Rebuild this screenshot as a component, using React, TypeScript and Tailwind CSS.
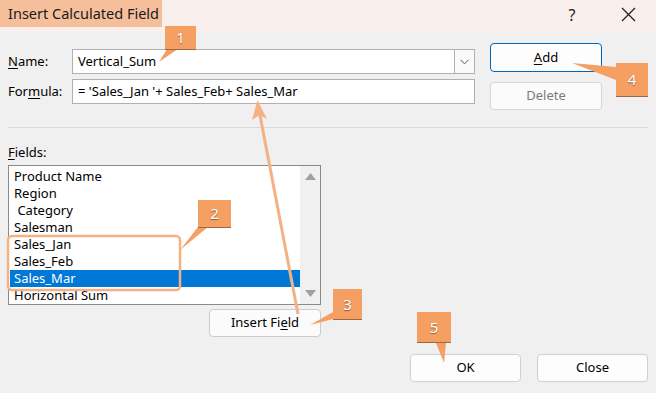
import React from "react";

const items = ["Product Name", "Region", " Category", "Salesman", "Sales_Jan", "Sales_Feb", "Sales_Mar", "Horizontal Sum"];

function Callout({ n, className }: { n: string; className: string }) {
  return (
    <div
      className={`absolute flex items-center justify-center bg-[#f59f63] text-white text-[15px] border-b border-[#9a6a48] [text-shadow:0_1px_1px_rgba(0,0,0,0.45)] ${className}`}
    >
      {n}
    </div>
  );
}

export default function App() {
  return (
    <div className="relative w-[656px] h-[393px] overflow-hidden bg-[#f0f0f0] text-black font-['Noto_Sans',sans-serif]">
      {/* Title bar */}
      <div className="flex h-[32px] bg-[#f9efec]">
        <div className="h-[27px] w-[162px] bg-[#f6bf9c] pl-[8px] flex items-center text-[14.5px] text-[#1a1a1a]">
          Insert Calculated Field
        </div>
        <div className="ml-auto flex items-center h-[29px] pr-[18px]">
          <span className="w-[20px] text-center text-[16px] text-[#222]">?</span>
          <span className="ml-[36px] w-[20px] h-[20px] flex items-center justify-center">
            <svg width="15" height="15" viewBox="0 0 15 15">
              <path d="M1 1 L14 14 M14 1 L1 14" stroke="#222" strokeWidth="1.3" />
            </svg>
          </span>
        </div>
      </div>

      {/* Upper section */}
      <div className="flex h-[95px] px-[8px] text-[13px]">
        <div className="w-[467px] pt-[17px] flex flex-col gap-[5px]">
          <div className="flex items-center h-[25px]">
            <span className="w-[64px]">
              <span className="underline underline-offset-2">N</span>ame:
            </span>
            <div className="flex-1 h-[25px] bg-white border border-[#b0b0b0] flex items-center">
              <span className="pl-[5px] flex-1">Vertical_Sum</span>
              <div className="w-[20px] h-full border-l border-[#b0b0b0] flex items-center justify-center bg-[#fafafa]">
                <svg width="9" height="6" viewBox="0 0 9 6">
                  <path d="M0.5 0.8 L4.5 4.8 L8.5 0.8" stroke="#555" strokeWidth="1" fill="none" />
                </svg>
              </div>
            </div>
          </div>
          <div className="flex items-center h-[25px]">
            <span className="w-[64px]">
              For<span className="underline underline-offset-2">m</span>ula:
            </span>
            <div className="flex-1 h-[25px] bg-white border border-[#b0b0b0] flex items-center pl-[5px]">
              = 'Sales_Jan '+ Sales_Feb+ Sales_Mar
            </div>
          </div>
        </div>
        <div className="ml-[15px] w-[112px] pt-[11px] flex flex-col gap-[10px]">
          <div className="h-[29px] rounded-[4px] border border-[#0067c0] bg-[#fdfdfd] flex items-center justify-center">
            <span>
              <span className="underline underline-offset-2">A</span>dd
            </span>
          </div>
          <div className="h-[28px] rounded-[4px] border border-[#d6d6d6] bg-[#fbfbfb] flex items-center justify-center text-[#7a7a7a]">
            Delete
          </div>
        </div>
      </div>

      <div className="mx-[8px] h-px bg-[#dadada]" />

      {/* Fields */}
      <div className="px-[8px] text-[13px]">
        <div className="mt-[16px] leading-[16px]">
          <span className="underline underline-offset-2">F</span>ields:
        </div>
        <div className="mt-[5px] w-[313px] h-[140px] border border-[#8a8a8a] bg-white flex overflow-hidden">
          <div className="flex-1 pt-[2px] pl-[1px]">
            {items.map((it) => (
              <div
                key={it}
                className={`h-[17px] leading-[17px] pl-[4px] whitespace-pre ${
                  it === "Sales_Mar" ? "bg-[#0078d7] text-white" : ""
                }`}
              >
                {it}
              </div>
            ))}
          </div>
          <div className="w-[20px] bg-[#f0f0f0] flex flex-col items-center justify-between py-[7px]">
            <svg width="11" height="7" viewBox="0 0 11 7">
              <path d="M5.5 0 L11 7 L0 7 Z" fill="#a0a0a0" />
            </svg>
            <svg width="11" height="7" viewBox="0 0 11 7">
              <path d="M0 0 L11 0 L5.5 7 Z" fill="#a0a0a0" />
            </svg>
          </div>
        </div>
        <div className="mt-[4px] ml-[201px] w-[112px] h-[28px] rounded-[4px] border border-[#c8ccd2] bg-[#fbfbfb] flex items-center justify-center">
          <span>
            Insert Fi<span className="underline underline-offset-2">e</span>ld
          </span>
        </div>
        <div className="mt-[17px] flex justify-end gap-[16px]">
          <div className="w-[111px] h-[28px] rounded-[4px] border border-[#d0d0d0] bg-[#fdfdfd] flex items-center justify-center">
            OK
          </div>
          <div className="w-[111px] h-[28px] rounded-[4px] border border-[#d0d0d0] bg-[#fdfdfd] flex items-center justify-center">
            Close
          </div>
        </div>
      </div>

      {/* Annotation overlay */}
      <svg className="absolute inset-0 pointer-events-none" width="656" height="393" viewBox="0 0 656 393">
        <rect x="8" y="236" width="172" height="54" rx="4" fill="none" stroke="#f4b183" strokeWidth="2.5" />
        <line x1="298" y1="314" x2="259" y2="110" stroke="#f4b183" strokeWidth="3" />
        <polygon points="257.5,100 267,119 259.5,115 252,120" fill="#f4b183" />
        <polygon points="167,49 178,49 159,62" fill="#f59f63" />
        <polygon points="198,227 208,227 180,250" fill="#f59f63" />
        <polygon points="333,312 333,319 310,325" fill="#f59f63" />
        <polygon points="616,67 616,80 572,63" fill="#f59f63" />
        <polygon points="436,343 446,343 444,363" fill="#f59f63" />
      </svg>
      <Callout n="1" className="left-[165px] top-[26px] w-[31px] h-[24px]" />
      <Callout n="2" className="left-[198px] top-[200px] w-[33px] h-[28px]" />
      <Callout n="3" className="left-[333px] top-[289px] w-[29px] h-[31px]" />
      <Callout n="4" className="left-[616px] top-[63px] w-[32px] h-[34px]" />
      <Callout n="5" className="left-[417px] top-[312px] w-[34px] h-[31px]" />
    </div>
  );
}
